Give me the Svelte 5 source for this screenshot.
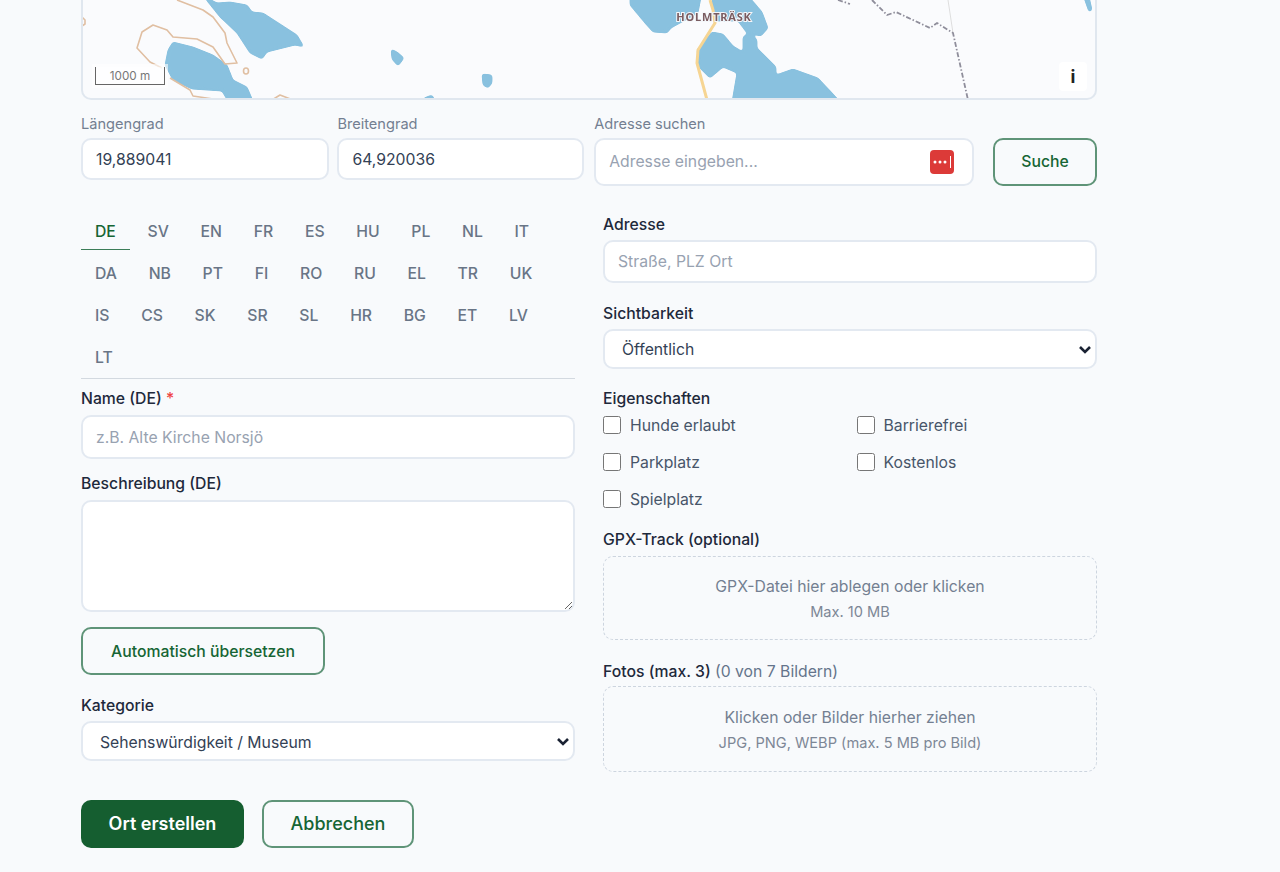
<script>
	const languages = [
		'DE', 'SV', 'EN', 'FR', 'ES', 'HU', 'PL', 'NL', 'IT',
		'DA', 'NB', 'PT', 'FI', 'RO', 'RU', 'EL', 'TR', 'UK',
		'IS', 'CS', 'SK', 'SR', 'SL', 'HR', 'BG', 'ET', 'LV',
		'LT'
	];
	let activeLang = $state('DE');

	const features = ['Hunde erlaubt', 'Barrierefrei', 'Parkplatz', 'Kostenlos', 'Spielplatz'];

	const lakes = [
		'M196,-8 L217,3 L230,2 L247,5 L252,12 L263,13 L297,35 L304,47 L295,45 L267,52 L262,59 L250,53 L237,33 L220,17 L200,-8 Z',
		'M173,42 L193,47 L213,55 L227,65 L233,80 L247,87 L256,108 L232,108 L222,91 L192,89 L173,80 L165,65 L168,50 Z',
		'M391,49 L397,52 L404,58 L398,66 L392,59 Z',
		'M482,74 L492,75 L492,83 L488,88 L483,85 Z',
		'M421,108 L424,98 L432,95 L439,108 Z',
		'M630,-8 L702,-8 L698,13 L671,28 L667,33 L653,32 L645,23 L630,5 Z',
		'M711,-8 L745,-8 L762,12 L768,28 L761,36 L747,33 L738,21 L715,21 Z',
		'M712,32 L723,34 L733,46 L743,52 L743,37 L750,32 L757,40 L757,48 L776,67 L776,75 L793,69 L818,78 L846,108 L731,108 L737,73 L723,67 L710,78 L699,67 L697,50 Z',
		'M1082,-8 L1088,-8 L1092,10 L1089,12 Z'
	];
	const contours = [
		'M177,0 L203,10 L213,17 L225,33 L227,43 L237,63 L225,64 L213,47 L197,39 L173,37 L167,30 L153,25 L142,32 L137,48 L150,62 L162,68',
		'M170,78 L190,90 L193,96 L220,100',
		'M272,100 L280,95 L293,100',
		'M82,17 L85,20 L85,24 L82,26'
	];
</script>

<div class="page">
	<div class="map">
		<svg class="map-art" viewBox="81 0 1016 100" width="1016" height="100" aria-hidden="true">
			<defs>
				<filter id="soft"><feGaussianBlur stdDeviation="0.45" /></filter>
				<filter id="round" x="-5%" y="-20%" width="110%" height="140%">
					<feGaussianBlur stdDeviation="1.6" />
					<feComponentTransfer>
						<feFuncA type="linear" slope="5" intercept="-1.4" />
					</feComponentTransfer>
				</filter>
			</defs>
			<g filter="url(#round)">
				{#each lakes as d}
					<path class="lake" {d} />
				{/each}
			</g>
			<g filter="url(#soft)">
				{#each contours as d}
					<path class="contour" {d} />
				{/each}
				<ellipse class="contour" cx="246" cy="71" rx="2.5" ry="3" />
				<path class="road" d="M710,0 L713,10 L715,23 L698,50 L697,63 L707,100" />
				<path class="track" d="M948,0 L953,33" />
				<path class="border" d="M838,0 L850,4 M872,0 L887,15 L896,12 L930,28 L937,23 L953,33 L968,100" />
				<text class="place" x="714" y="21">HOLMTRÄSK</text>
			</g>
		</svg>
		<div class="scale">1000 m</div>
		<button class="info" type="button">i</button>
	</div>

	<div class="coords">
		<label class="coord">
			<span class="small-label">Längengrad</span>
			<input class="field coord-input" value="19,889041" />
		</label>
		<label class="coord">
			<span class="small-label">Breitengrad</span>
			<input class="field coord-input" value="64,920036" />
		</label>
		<label class="search">
			<span class="small-label">Adresse suchen</span>
			<span class="search-box">
				<input class="field search-input" placeholder="Adresse eingeben..." />
				<svg class="pw-icon" viewBox="0 0 24 24" aria-hidden="true">
					<rect width="24" height="24" rx="4" fill="#dc3a38" />
					<circle cx="5" cy="12" r="1.5" fill="#fff" />
					<circle cx="10" cy="12" r="1.5" fill="#fff" />
					<circle cx="15" cy="12" r="1.5" fill="#fff" />
					<path d="M20.5 6v12" stroke="#fff" stroke-width="1" />
				</svg>
			</span>
		</label>
		<button class="btn-outline search-btn" type="button">Suche</button>
	</div>

	<div class="columns">
		<div class="col">
			<div class="tabs">
				{#each languages as lang}
					<button class="tab" class:active={activeLang === lang} type="button" onclick={() => (activeLang = lang)}>{lang}</button>
				{/each}
			</div>

			<label class="group name-group">
				<span class="label">Name (DE) <span class="req">*</span></span>
				<input class="field text-input" placeholder="z.B. Alte Kirche Norsjö" />
			</label>

			<label class="group">
				<span class="label">Beschreibung (DE)</span>
				<textarea class="field area"></textarea>
			</label>

			<button class="btn-outline translate" type="button">Automatisch übersetzen</button>

			<label class="group cat-group">
				<span class="label">Kategorie</span>
				<span class="select-wrap">
					<select class="field select">
						<option>Sehenswürdigkeit / Museum</option>
					</select>
					<svg class="chevron" viewBox="0 0 14 9" aria-hidden="true"><path d="M2 2l5 5 5-5" /></svg>
				</span>
			</label>
		</div>

		<div class="col right">
			<label class="group">
				<span class="label address-label">Adresse</span>
				<input class="field text-input address-input" placeholder="Straße, PLZ Ort" />
			</label>

			<label class="group vis-group">
				<span class="label">Sichtbarkeit</span>
				<span class="select-wrap">
					<select class="field select vis-select">
						<option>Öffentlich</option>
					</select>
					<svg class="chevron" viewBox="0 0 14 9" aria-hidden="true"><path d="M2 2l5 5 5-5" /></svg>
				</span>
			</label>

			<div class="group feat-group">
				<span class="label">Eigenschaften</span>
				<div class="features">
					{#each features as feature}
						<label class="check">
							<input type="checkbox" />
							<span>{feature}</span>
						</label>
					{/each}
				</div>
			</div>

			<div class="group gpx-group">
				<span class="label">GPX-Track (optional)</span>
				<div class="drop gpx-drop">
					<span class="drop-main">GPX-Datei hier ablegen oder klicken</span>
					<span class="drop-sub">Max. 10 MB</span>
				</div>
			</div>

			<div class="group photo-group">
				<span class="label">Fotos (max. 3) <span class="count">(0 von 7 Bildern)</span></span>
				<div class="drop photo-drop">
					<span class="drop-main">Klicken oder Bilder hierher ziehen</span>
					<span class="drop-sub">JPG, PNG, WEBP (max. 5 MB pro Bild)</span>
				</div>
			</div>
		</div>
	</div>

	<div class="actions">
		<button class="btn-primary" type="button">Ort erstellen</button>
		<button class="btn-outline cancel" type="button">Abbrechen</button>
	</div>
</div>

<style>
	:global(body) {
		background: #f8fafc;
		font-family: Inter, 'Liberation Sans', sans-serif;
		color: #1e293b;
	}

	.page {
		width: 1016px;
		height: 872px;
		margin-left: 81px;
		overflow: hidden;
	}

	.map {
		position: relative;
		height: 100px;
		box-sizing: border-box;
		background: #fafbfd;
		border: 2px solid #e0e7ef;
		border-top: none;
		border-radius: 0 0 10px 10px;
		overflow: hidden;
	}

	.map-art {
		position: absolute;
		left: -2px;
		top: 0;
	}

	.lake {
		fill: #89c1df;
	}

	.contour {
		fill: none;
		stroke: #e0bfa2;
		stroke-width: 1.6;
		stroke-linejoin: round;
	}

	.road {
		fill: none;
		stroke: #f6d593;
		stroke-width: 3;
		stroke-linejoin: round;
	}

	.track {
		fill: none;
		stroke: #dedede;
		stroke-width: 1;
	}

	.border {
		fill: none;
		stroke: #8f8e9b;
		stroke-width: 1.8;
		stroke-dasharray: 5 2 1.5 2;
	}

	.place {
		font-family: 'Noto Sans', sans-serif;
		font-size: 11px;
		font-weight: 700;
		letter-spacing: 0.8px;
		text-anchor: middle;
		fill: #7a5c60;
		stroke: #f4f7fa;
		stroke-width: 2px;
		paint-order: stroke;
	}

	.scale {
		position: absolute;
		left: 12px;
		bottom: 13px;
		box-sizing: border-box;
		width: 70px;
		height: 18px;
		border: 1px solid #666;
		border-top: none;
		background: rgba(255, 255, 255, 0.8);
		box-shadow: 0 0 0 3px rgba(255, 255, 255, 0.6);
		color: #777;
		font-size: 11.7px;
		line-height: 19px;
		text-align: center;
	}

	.info {
		position: absolute;
		right: 8px;
		bottom: 7px;
		width: 28px;
		height: 29px;
		padding: 0;
		border: none;
		border-radius: 4px;
		background: #fff;
		color: #222;
		font-family: Inter, sans-serif;
		font-size: 18px;
		font-weight: 700;
		line-height: 28px;
	}

	.coords {
		display: flex;
		align-items: flex-start;
		margin-top: 16px;
	}

	.coord {
		display: flex;
		flex-direction: column;
		width: 248px;
		margin-right: 8.5px;
	}

	.coord:nth-child(2) {
		width: 247px;
		margin-right: 10px;
	}

	.search {
		display: flex;
		flex-direction: column;
		width: 380px;
	}

	.small-label {
		font-size: 14.6px;
		line-height: 16px;
		margin-bottom: 6px;
		color: #737f91;
	}

	.field {
		box-sizing: border-box;
		width: 100%;
		background: #fff;
		border: 2px solid #e3e9f1;
		border-radius: 10px;
		font-family: inherit;
		font-size: 15.75px;
		color: #334155;
		outline: none;
	}

	.field::placeholder {
		color: #98a2b1;
		opacity: 1;
	}

	.coord-input {
		height: 42px;
		padding: 0 13px;
	}

	.search-box {
		position: relative;
		display: block;
	}

	.search-input {
		display: block;
		height: 48px;
		padding: 0 13px 2px;
	}

	.pw-icon {
		position: absolute;
		right: 20px;
		top: 12px;
		width: 24px;
		height: 24px;
	}

	.btn-outline {
		box-sizing: border-box;
		background: transparent;
		border: 2px solid #5f9478;
		border-radius: 10px;
		color: #166534;
		font-family: inherit;
		font-weight: 500;
	}

	.search-btn {
		width: 104px;
		height: 48px;
		margin-top: 22px;
		margin-left: 19px;
		padding: 0 0 2px;
		font-size: 15.75px;
	}

	.columns {
		display: grid;
		grid-template-columns: 494px 494px;
		column-gap: 28px;
		margin-top: 26px;
	}

	.right {
		padding-top: 4px;
	}

	.tabs {
		display: flex;
		flex-wrap: wrap;
		column-gap: 3.7px;
		row-gap: 4px;
		height: 166px;
		align-content: flex-start;
		border-bottom: 1px solid #d3d9e0;
	}

	.tab {
		box-sizing: border-box;
		height: 38px;
		padding: 2px 14px 0;
		background: none;
		border: none;
		border-bottom: 1px solid transparent;
		color: #697586;
		font-family: inherit;
		font-size: 15.75px;
		font-weight: 500;
	}

	.tab.active {
		color: #166534;
		border-bottom-color: #3c7d58;
	}

	.group {
		display: flex;
		flex-direction: column;
	}

	.label {
		font-size: 15.75px;
		font-weight: 500;
		line-height: 17px;
		margin-bottom: 8px;
		color: #1e293b;
	}

	.address-label {
		margin-bottom: 7px;
	}

	.req {
		color: #ef4444;
	}

	.name-group {
		margin-top: 11px;
	}

	.text-input {
		height: 44px;
		padding: 0 13px;
	}

	.address-input {
		height: 43px;
		padding-bottom: 1px;
	}

	.name-group + .group {
		margin-top: 16px;
	}

	.area {
		height: 112px;
		padding: 10px 13px;
		resize: vertical;
		display: block;
	}

	.translate {
		width: 244px;
		height: 48px;
		margin-top: 15px;
		font-size: 15.75px;
	}

	.cat-group {
		margin-top: 22px;
	}

	.cat-group .label,
	.vis-group .label {
		margin-bottom: 7px;
	}

	.select-wrap {
		position: relative;
		display: block;
	}

	.select {
		display: block;
		appearance: none;
		height: 40px;
		padding: 2px 30px 0 17px;
	}

	.vis-select {
		padding-top: 0;
	}

	.chevron {
		position: absolute;
		right: 5px;
		top: 50%;
		width: 14px;
		height: 9px;
		margin-top: -4.5px;
		fill: none;
		stroke: #1a2233;
		stroke-width: 2.6;
		pointer-events: none;
	}

	.vis-group {
		margin-top: 22px;
	}

	.feat-group {
		margin-top: 21px;
	}

	.feat-group .label {
		margin-bottom: 0;
	}

	.features {
		display: grid;
		grid-template-columns: 253.5px 1fr;
		row-gap: 15px;
		margin-top: 7px;
	}

	.check {
		display: flex;
		align-items: center;
		gap: 9px;
		height: 22px;
		font-size: 15.75px;
		color: #475569;
	}

	.check input {
		width: 18px;
		height: 18px;
		margin: 0;
	}

	.gpx-group {
		margin-top: 21px;
	}

	.gpx-group .label {
		margin-bottom: 8px;
	}

	.photo-group .label {
		margin-bottom: 6px;
	}

	.drop {
		box-sizing: border-box;
		display: flex;
		flex-direction: column;
		align-items: center;
		border: 1px dashed #cdd5df;
		border-radius: 10px;
	}

	.gpx-drop {
		height: 84px;
		padding-top: 21px;
	}

	.photo-drop {
		height: 86px;
		padding-top: 22px;
	}

	.drop-main {
		font-size: 15.75px;
		line-height: 17px;
		color: #737f91;
	}

	.drop-sub {
		margin-top: 10px;
		font-size: 14.6px;
		line-height: 15px;
		color: #7d8796;
	}

	.photo-group {
		margin-top: 23px;
	}

	.count {
		font-weight: 400;
		color: #64748b;
	}

	.actions {
		display: flex;
		gap: 18px;
		margin-top: 28px;
	}

	.btn-primary {
		box-sizing: border-box;
		width: 163px;
		height: 48px;
		padding: 0 0 2px;
		background: #155e30;
		border: none;
		border-radius: 10px;
		color: #fff;
		font-family: inherit;
		font-size: 18px;
		font-weight: 600;
	}

	.cancel {
		width: 152px;
		height: 48px;
		padding: 0 0 2px;
		font-size: 18px;
	}
</style>
